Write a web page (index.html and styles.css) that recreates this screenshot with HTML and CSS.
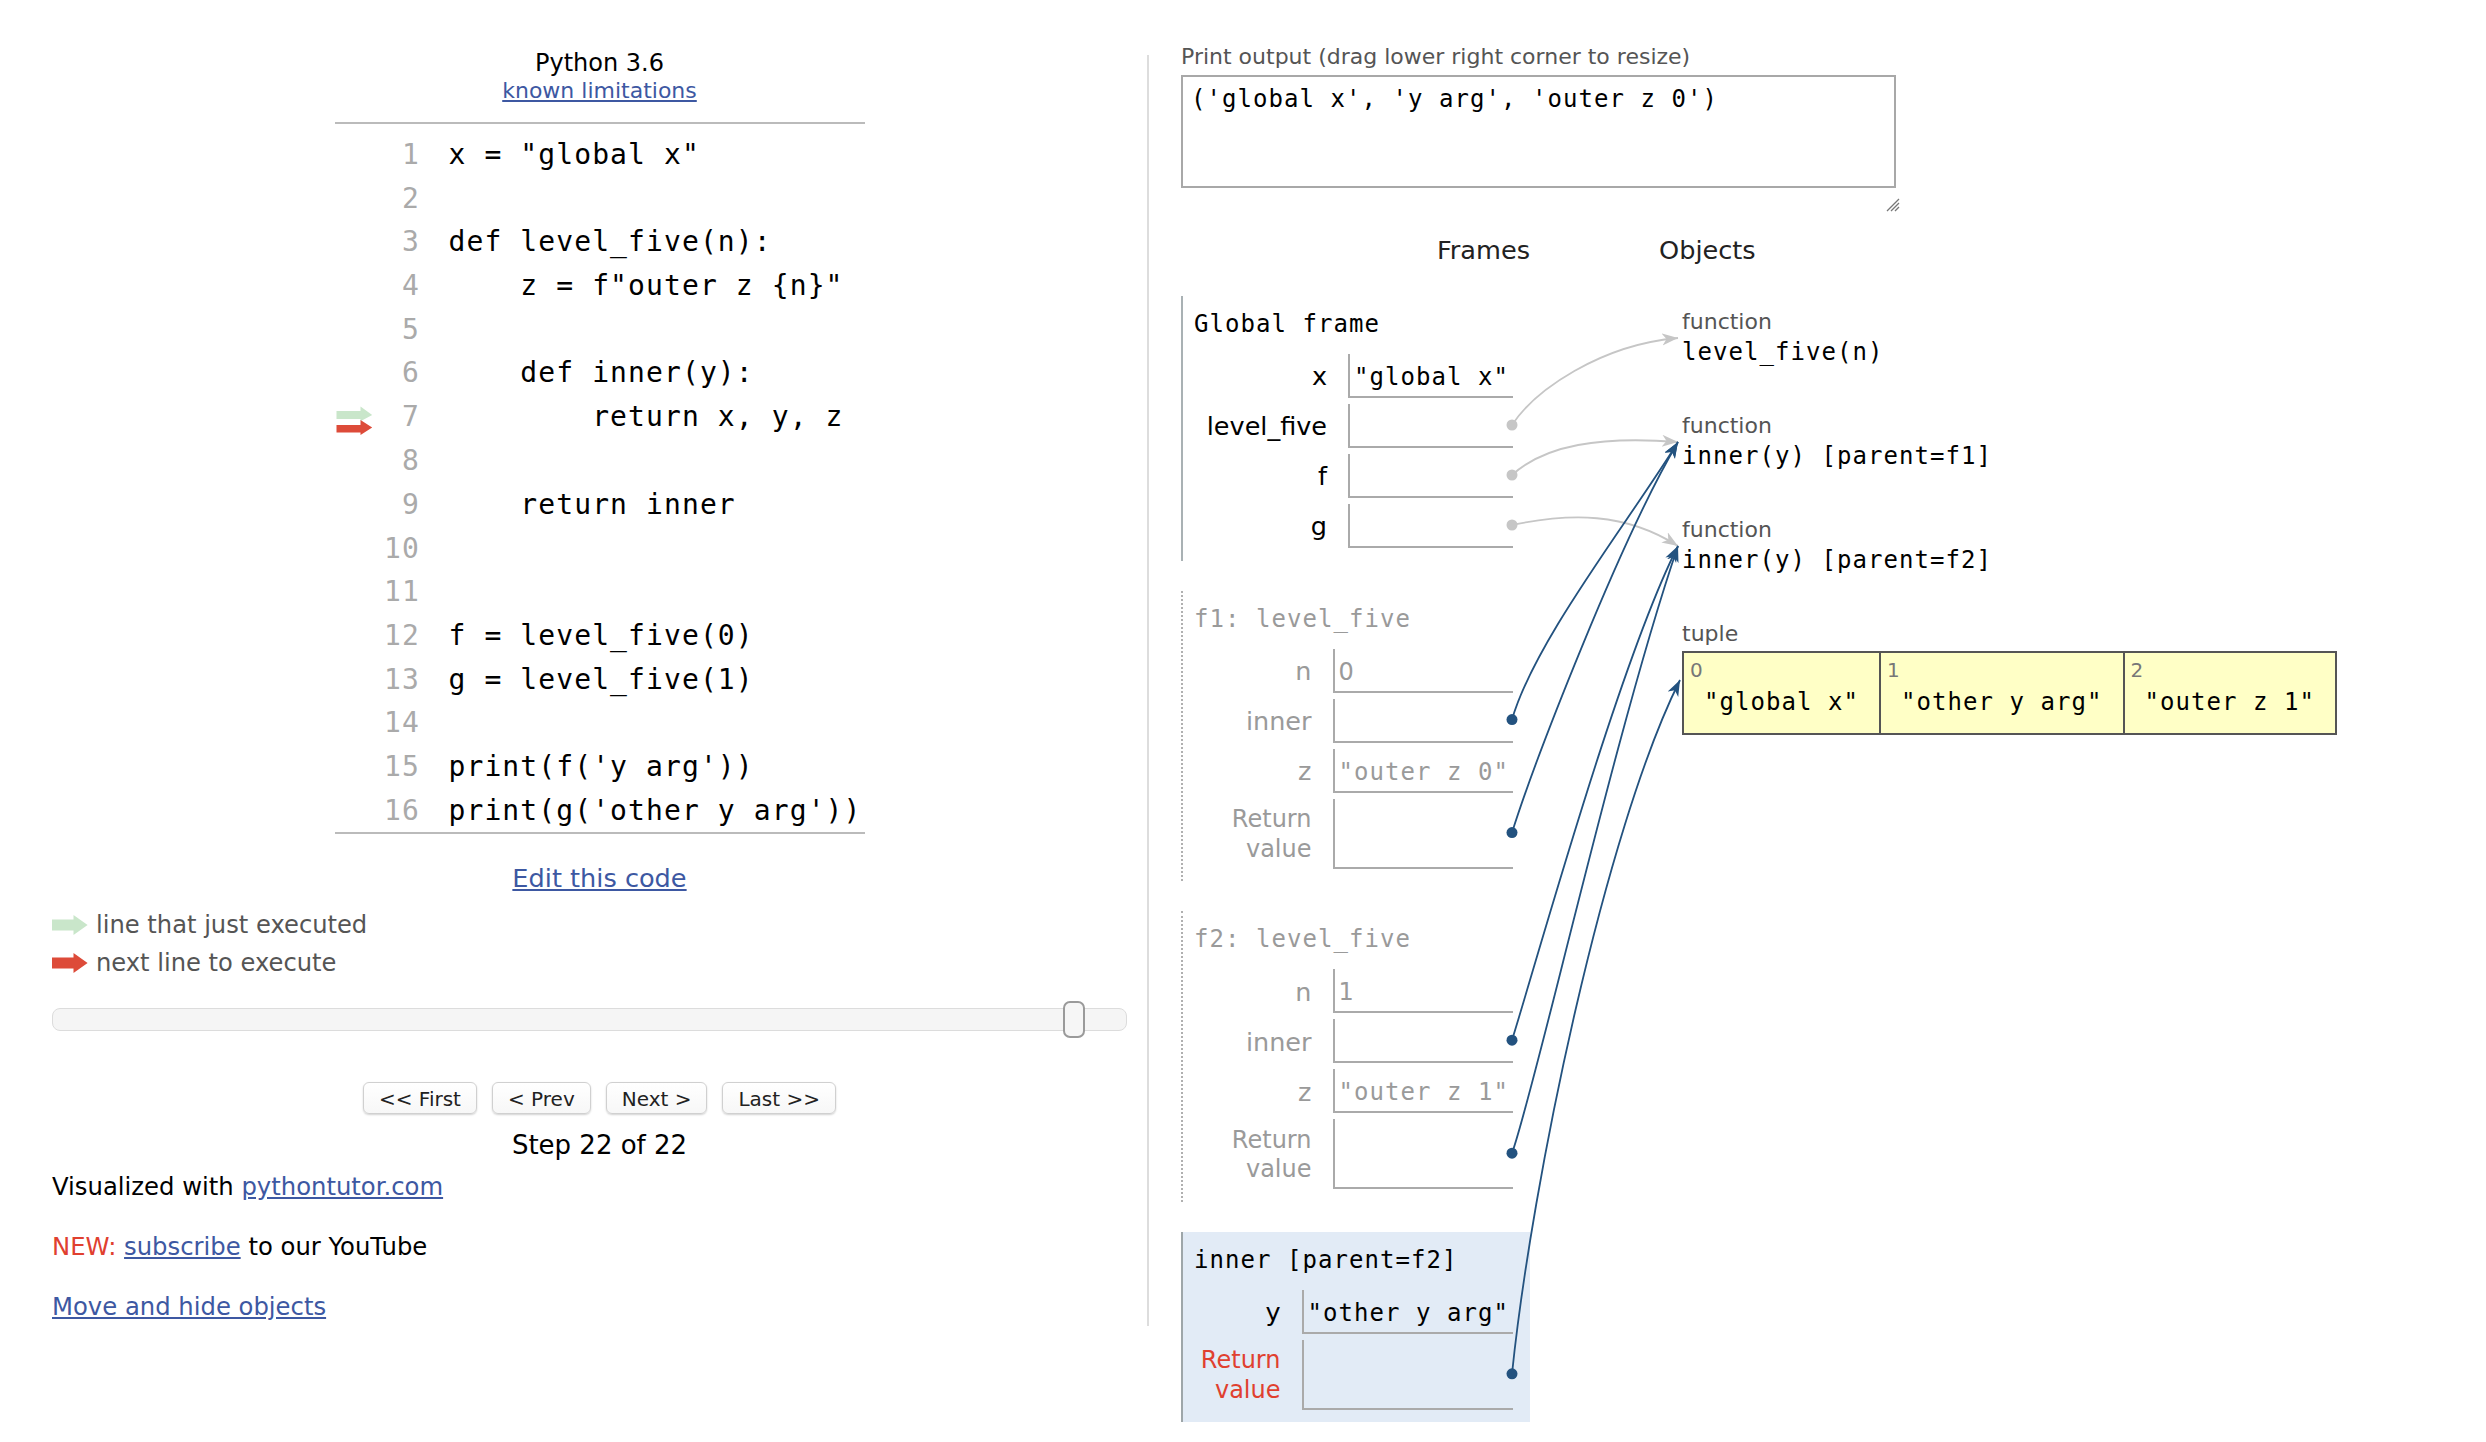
FILE: index.html
```html
<!DOCTYPE html>
<html>
<head>
<meta charset="utf-8">
<title>Python Tutor</title>
<link rel="stylesheet" href="styles.css">
</head>
<body>
<div class="page">
  <div class="left">
    <div class="lang">Python 3.6</div>
    <div class="limits"><a href="#">known limitations</a></div>
    <div class="codebox">
      <table class="code">
        <colgroup><col class="cg"><col class="cl"><col></colgroup>
        <tr><td class="g"></td><td class="ln">1</td><td class="c">x = "global x"</td></tr>
        <tr><td class="g"></td><td class="ln">2</td><td class="c"></td></tr>
        <tr><td class="g"></td><td class="ln">3</td><td class="c">def level_five(n):</td></tr>
        <tr><td class="g"></td><td class="ln">4</td><td class="c">    z = f"outer z {n}"</td></tr>
        <tr><td class="g"></td><td class="ln">5</td><td class="c"></td></tr>
        <tr><td class="g"></td><td class="ln">6</td><td class="c">    def inner(y):</td></tr>
        <tr><td class="g"><svg class="garrows" width="40" height="44" viewBox="0 0 40 44"><polygon points="1.5,16 25.5,16 25.5,11.6 37.2,19.9 25.5,26.2 25.5,24 1.5,24" fill="#c9e6ca"/><polygon points="1.5,30 25.5,30 25.5,25 37.2,32.4 25.5,40 25.5,37.6 1.5,37.6" fill="#dd4b39"/></svg></td><td class="ln">7</td><td class="c">        return x, y, z</td></tr>
        <tr><td class="g"></td><td class="ln">8</td><td class="c"></td></tr>
        <tr><td class="g"></td><td class="ln">9</td><td class="c">    return inner</td></tr>
        <tr><td class="g"></td><td class="ln">10</td><td class="c"></td></tr>
        <tr><td class="g"></td><td class="ln">11</td><td class="c"></td></tr>
        <tr><td class="g"></td><td class="ln">12</td><td class="c">f = level_five(0)</td></tr>
        <tr><td class="g"></td><td class="ln">13</td><td class="c">g = level_five(1)</td></tr>
        <tr><td class="g"></td><td class="ln">14</td><td class="c"></td></tr>
        <tr><td class="g"></td><td class="ln">15</td><td class="c">print(f('y arg'))</td></tr>
        <tr><td class="g"></td><td class="ln">16</td><td class="c">print(g('other y arg'))</td></tr>
      </table>
    </div>
    <div class="edit"><a href="#">Edit this code</a></div>
    <div class="legend">
      <div class="lrow"><svg width="36" height="20" viewBox="0 0 36 20"><polygon points="0,4.5 21.5,4.5 21.5,0 35.6,10 21.5,20 21.5,15.5 0,15.5" fill="#c9e6ca"/></svg><span>line that just executed</span></div>
      <div class="lrow"><svg width="36" height="20" viewBox="0 0 36 20"><polygon points="0,4.5 21.5,4.5 21.5,0 35.6,10 21.5,20 21.5,15.5 0,15.5" fill="#dd4b39"/></svg><span>next line to execute</span></div>
    </div>
    <div class="slider"><div class="handle"></div></div>
    <div class="buttons">
      <button class="btn">&lt;&lt; First</button>
      <button class="btn">&lt; Prev</button>
      <button class="btn">Next &gt;</button>
      <button class="btn">Last &gt;&gt;</button>
    </div>
    <div class="step">Step 22 of 22</div>
    <div class="foot">Visualized with <a href="#">pythontutor.com</a></div>
    <div class="foot gap"><span class="new">NEW:</span> <a href="#">subscribe</a> to our YouTube</div>
    <div class="foot gap"><a href="#">Move and hide objects</a></div>
  </div>
  <div class="divider"></div>
  <div class="right">
    <div class="plabel">Print output (drag lower right corner to resize)</div>
    <div class="pwrap">
      <div class="pbox">('global x', 'y arg', 'outer z 0')</div>
      <svg class="grip" width="14" height="15" viewBox="0 0 14 15"><path d="M13,2 L1,14 M13,6 L5,14 M13,10 L9,14" stroke="#777" stroke-width="1.3" fill="none"/></svg>
    </div>
    <div class="viz">
      <div class="hdr frames-h">Frames</div>
      <div></div>
      <div class="hdr objects-h">Objects</div>

      <div class="stack">
        <div class="frame">
          <div class="ftitle">Global frame</div>
          <table class="vars">
            <tr><td class="name">x</td><td class="vc"><div class="val">"global x"</div></td></tr>
            <tr><td class="name">level_five</td><td class="vc"><div class="val"></div></td></tr>
            <tr><td class="name">f</td><td class="vc"><div class="val"></div></td></tr>
            <tr><td class="name">g</td><td class="vc"><div class="val"></div></td></tr>
          </table>
        </div>
        <div class="frame dim">
          <div class="ftitle">f1: level_five</div>
          <table class="vars">
            <tr><td class="name">n</td><td class="vc"><div class="val num">0</div></td></tr>
            <tr><td class="name">inner</td><td class="vc"><div class="val"></div></td></tr>
            <tr><td class="name">z</td><td class="vc"><div class="val">"outer z 0"</div></td></tr>
            <tr><td class="name ret">Return<br>value</td><td class="vc"><div class="val tall"></div></td></tr>
          </table>
        </div>
        <div class="frame dim">
          <div class="ftitle">f2: level_five</div>
          <table class="vars">
            <tr><td class="name">n</td><td class="vc"><div class="val num">1</div></td></tr>
            <tr><td class="name">inner</td><td class="vc"><div class="val"></div></td></tr>
            <tr><td class="name">z</td><td class="vc"><div class="val">"outer z 1"</div></td></tr>
            <tr><td class="name ret">Return<br>value</td><td class="vc"><div class="val tall"></div></td></tr>
          </table>
        </div>
        <div class="frame cur">
          <div class="ftitle">inner [parent=f2]</div>
          <table class="vars">
            <tr><td class="name">y</td><td class="vc"><div class="val">"other y arg"</div></td></tr>
            <tr><td class="name ret red">Return<br>value</td><td class="vc"><div class="val tall"></div></td></tr>
          </table>
        </div>
      </div>
      <div></div>
      <div class="heap">
        <div class="obj">
          <div class="tlabel">function</div>
          <div class="fname">level_five(n)</div>
        </div>
        <div class="obj">
          <div class="tlabel">function</div>
          <div class="fname">inner(y) [parent=f1]</div>
        </div>
        <div class="obj">
          <div class="tlabel">function</div>
          <div class="fname">inner(y) [parent=f2]</div>
        </div>
        <div class="obj">
          <div class="tlabel">tuple</div>
          <div class="tuple">
            <div class="elt"><div class="idx">0</div><div class="tv">"global x"</div></div>
            <div class="elt"><div class="idx">1</div><div class="tv">"other y arg"</div></div>
            <div class="elt"><div class="idx">2</div><div class="tv">"outer z 1"</div></div>
          </div>
        </div>
      </div>
    </div>
  </div>
</div>

<svg class="arrows" width="2486" height="1442" viewBox="0 0 2486 1442">
  <defs>
    <marker id="ag" markerUnits="userSpaceOnUse" markerWidth="18" markerHeight="14" refX="16" refY="6" orient="auto">
      <path d="M0,0 L16,6 L0,12 L4.5,6 Z" fill="#c6c6c6"/>
    </marker>
    <marker id="ab" markerUnits="userSpaceOnUse" markerWidth="18" markerHeight="14" refX="16" refY="6" orient="auto">
      <path d="M0,0 L16,6 L0,12 L4.5,6 Z" fill="#23527f"/>
    </marker>
  </defs>
  <g fill="none" stroke="#c6c6c6" stroke-width="1.8">
    <path d="M1512,425 C1535,390 1600,345 1678,338" marker-end="url(#ag)"/>
    <path d="M1512,475 C1545,445 1600,436 1678,442" marker-end="url(#ag)"/>
    <path d="M1512,525 C1570,513 1625,512 1678,546" marker-end="url(#ag)"/>
  </g>
  <g fill="#c6c6c6">
    <circle cx="1512" cy="425" r="5.5"/>
    <circle cx="1512" cy="475" r="5.5"/>
    <circle cx="1512" cy="525" r="5.5"/>
  </g>
  <g fill="none" stroke="#23527f" stroke-width="1.8">
    <path d="M1512,719.6 C1535,640 1630,520 1678,442" marker-end="url(#ab)"/>
    <path d="M1512,832.6 C1535,760 1620,540 1678,442" marker-end="url(#ab)"/>
    <path d="M1512,1040.2 C1537,960 1620,660 1678,546" marker-end="url(#ab)"/>
    <path d="M1512,1153.2 C1535,1090 1615,730 1678,546" marker-end="url(#ab)"/>
    <path d="M1512,1373.8 C1532,1180 1605,830 1680,680" marker-end="url(#ab)"/>
  </g>
  <g fill="#23527f">
    <circle cx="1512" cy="719.6" r="5.5"/>
    <circle cx="1512" cy="832.6" r="5.5"/>
    <circle cx="1512" cy="1040.2" r="5.5"/>
    <circle cx="1512" cy="1153.2" r="5.5"/>
    <circle cx="1512" cy="1373.8" r="5.5"/>
  </g>
</svg>
</body>
</html>
```

FILE: styles.css
```css
* { box-sizing: border-box; }

html, body {
  margin: 0;
  padding: 0;
  background: #ffffff;
}

body {
  position: relative;
  width: 2486px;
  height: 1442px;
  overflow: hidden;
  font-family: "DejaVu Sans", Verdana, sans-serif;
  color: #000;
}

a { color: #3d58a2; text-decoration: underline; }

.page {
  display: flex;
  align-items: flex-start;
  padding-top: 41px;
}

/* ---------- left column ---------- */
.left {
  margin-left: 52px;
  width: 1095px;
  margin-top: 7.7px;
  flex: none;
}

.lang {
  font-size: 24px;
  line-height: 28px;
  text-align: center;
}

.limits {
  font-size: 22px;
  line-height: 27.2px;
  text-align: center;
}

.codebox {
  width: 530px;
  margin: 18px auto 0;
  border-top: 2px solid #bbbbbb;
  border-bottom: 2px solid #bbbbbb;
  padding-top: 9px;
}

.code {
  width: 530px;
  table-layout: fixed;
  border-collapse: collapse;
  font-family: "DejaVu Sans Mono", monospace;
  font-size: 28px;
  letter-spacing: 1.1px;
}
.code .cg { width: 40px; }
.code .cl { width: 45.5px; }

.code td {
  padding: 0;
  height: 43.7px;
  line-height: 43.7px;
  white-space: pre;
  vertical-align: top;
}
.code td.ln { text-align: right; color: #aaaaaa; }
.code td.c { padding-left: 28.5px; color: #000; overflow: visible; }
.garrows { display: block; }

.edit {
  margin-top: 28.7px;
  font-size: 25.6px;
  line-height: 30px;
  text-align: center;
}

.legend {
  margin-top: 12.6px;
  font-size: 24.2px;
  color: #555;
}
.lrow {
  display: flex;
  align-items: center;
  height: 38px;
  gap: 8px;
}
.lrow svg { flex: none; margin-top: 1px; }

.slider {
  margin-top: 26.3px;
  width: 1075px;
  height: 23px;
  border: 1px solid #dcdcdc;
  border-radius: 8px;
  background: #f5f5f5;
  display: flex;
  align-items: center;
  justify-content: flex-end;
}
.handle {
  flex: none;
  width: 22px;
  height: 37px;
  margin-right: 41px;
  border: 2px solid #9a9a9a;
  border-radius: 7px;
  background: #f6f6f6;
}

.buttons {
  margin-top: 51px;
  display: flex;
  justify-content: center;
  gap: 15px;
}
.btn {
  height: 32px;
  padding: 3px 15px 0;
  font-family: "DejaVu Sans", Verdana, sans-serif;
  font-size: 20px;
  line-height: 27px;
  color: #222;
  background: linear-gradient(#ffffff, #f7f7f7);
  border: 1px solid #d0d0d0;
  border-radius: 6px;
  box-shadow: 0 1px 2px rgba(0,0,0,0.18);
}

.step {
  margin-top: 15px;
  font-size: 26px;
  line-height: 32px;
  text-align: center;
}

.foot {
  margin-top: 11px;
  font-size: 24.3px;
  line-height: 30px;
}
.foot.gap { margin-top: 30px; }
.new { color: #e0402f; }

.divider {
  flex: none;
  width: 2px;
  height: 1271px;
  margin-top: 14px;
  background: #dddddd;
}

/* ---------- right column ---------- */
.right {
  padding-left: 32px;
  flex: none;
}

.plabel {
  margin-top: 3px;
  font-size: 22px;
  line-height: 26px;
  color: #555;
}

.pwrap {
  width: 715px;
  margin-top: 5px;
  display: flex;
  flex-direction: column;
}
.pbox {
  height: 113.3px;
  border: 2px solid #a8a8a8;
  padding: 7px 8px 0;
  font-family: "DejaVu Sans Mono", monospace;
  font-size: 24px;
  letter-spacing: 1.05px;
  line-height: 30px;
  white-space: pre;
}
.grip {
  align-self: flex-end;
  margin-top: 8.7px;
  margin-right: -4px;
}

.viz {
  margin-top: 23.4px;
  display: grid;
  grid-template-columns: 349px 129px 720px;
  row-gap: 30.6px;
}

.hdr {
  font-size: 25.6px;
  line-height: 30px;
  color: #222;
}
.frames-h { text-align: right; }

/* frames */
.frame {
  border-left: 2px solid #a9b1b4;
  padding: 0 17px 6.6px 11px;
  margin-bottom: 30px;
}
.frame.dim {
  border-left: 2px dotted #b0b0b0;
  color: #9a9a9a;
}
.frame.cur {
  background: #e2ebf6;
  border-left-color: #9ea6a9;
}

.ftitle {
  padding-top: 13.2px;
  font-family: "DejaVu Sans Mono", monospace;
  font-size: 24px;
  letter-spacing: 1.05px;
  line-height: 30px;
  white-space: pre;
}

.vars {
  margin-left: auto;
  margin-right: 0;
  margin-top: 8.8px;
  border-collapse: separate;
  border-spacing: 0 6px;
}
.vars td { padding: 0; vertical-align: middle; }
.vars td.name {
  text-align: right;
  padding-right: 21px;
  padding-top: 1px;
  font-size: 25.5px;
  line-height: 30px;
  white-space: nowrap;
}
.vars td.name.ret {
  font-size: 24px;
  line-height: 29.3px;
  padding-top: 2px;
}
.vars td.name.red { color: #e0402f; }

.val {
  height: 44px;
  border-left: 2px solid #aaaaaa;
  border-bottom: 2px solid #aaaaaa;
  padding: 4px 4px 0 4px;
  font-family: "DejaVu Sans Mono", monospace;
  font-size: 24px;
  letter-spacing: 1.05px;
  line-height: 38px;
  white-space: pre;
}
.val.num {
  font-family: "DejaVu Sans", Verdana, sans-serif;
  letter-spacing: 0;
}
.val.tall { height: 70px; }

/* heap */
.heap {
  padding-left: 23px;
  padding-top: 12.4px;
  display: flex;
  flex-direction: column;
  align-items: flex-start;
  gap: 44px;
}
.tlabel {
  font-size: 22px;
  line-height: 28px;
  color: #555;
}
.fname {
  font-family: "DejaVu Sans Mono", monospace;
  font-size: 24px;
  letter-spacing: 1.05px;
  line-height: 32px;
  white-space: pre;
}

.tuple {
  margin-top: 2.6px;
  display: flex;
  border: 2px solid #555555;
  background: #ffffc6;
}
.elt {
  border-left: 2px solid #555555;
  padding: 5.4px 20px 15.6px;
}
.elt:first-child { border-left: none; }
.idx {
  margin-left: -14px;
  font-size: 20px;
  line-height: 24px;
  color: #777;
}
.tv {
  margin-top: 5px;
  font-family: "DejaVu Sans Mono", monospace;
  font-size: 24px;
  letter-spacing: 1.05px;
  line-height: 30px;
  white-space: pre;
  text-align: center;
}

/* connector overlay */
.arrows {
  position: absolute;
  left: 0;
  top: 0;
  pointer-events: none;
}
```
